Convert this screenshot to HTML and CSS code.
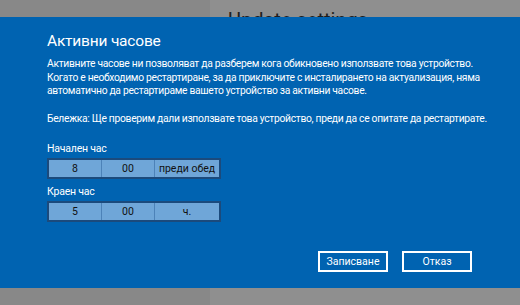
FILE: index.html
```html
<!DOCTYPE html>
<html lang="bg">

<head>
	<meta charset="UTF-8">
	<meta name="viewport" content="width=device-width, initial-scale=1.0">
	<title>Активни часове</title>
	<link rel="stylesheet" href="styles.css">
</head>

<body>
	<div class="page">
		<aside class="nav"></aside>
		<main class="content">
			<h1>Update settings</h1>
		</main>
	</div>

	<div class="dialog">
		<h2>Активни часове</h2>
		<p class="text">Активните часове ни позволяват да разберем кога обикновено използвате това устройство.<br>Когато е необходимо рестартиране, за да приключите с инсталирането на актуализация, няма<br>автоматично да рестартираме вашето устройство за активни часове.</p>
		<p class="text note">Бележка: Ще проверим дали използвате това устройство, преди да се опитате да рестартирате.</p>

		<div class="field">
			<label>Начален час</label>
			<div class="picker">
				<span>8</span>
				<span>00</span>
				<span class="wide">преди обед</span>
			</div>
		</div>
		<div class="field">
			<label>Краен час</label>
			<div class="picker">
				<span>5</span>
				<span>00</span>
				<span class="wide">ч.</span>
			</div>
		</div>

		<div class="buttons">
			<button>Записване</button>
			<button>Отказ</button>
		</div>
	</div>
</body>

</html>
```

FILE: styles.css
```css
html,
body {
	margin: 0;
	height: 100%;
}

body {
	position: relative;
	overflow: hidden;
	font-family: Roboto, "Noto Sans", sans-serif;
}

.page {
	display: grid;
	grid-template-columns: 210px 1fr;
	height: 100%;
}

.nav {
	background: #888888;
}

.content {
	background: #8f8f8f;
	padding-left: 18px;
}

h1 {
	margin: 0;
	padding-top: 7px;
	font-weight: 400;
	font-size: 20px;
	line-height: 26px;
	color: #1e1e1e;
}

.dialog {
	position: absolute;
	top: 17px;
	left: 0;
	right: 0;
	height: 271px;
	box-sizing: border-box;
	padding: 12px 30px 16px 47px;
	background: #0063b1;
	color: #fff;
	display: flex;
	flex-direction: column;
}

h2 {
	margin: 0;
	font-weight: 400;
	font-size: 15.5px;
	line-height: 24px;
	letter-spacing: -0.2px;
}

.text {
	margin: 4px 0 0;
	font-size: 10.3px;
	line-height: 13.5px;
	letter-spacing: -0.3px;
	white-space: nowrap;
}

.note {
	margin-top: 14px;
}

.field {
	margin-top: 17px;
}

.field + .field {
	margin-top: 6px;
}

label {
	display: block;
	font-size: 10.5px;
	line-height: 14px;
	margin-bottom: 2px;
	letter-spacing: -0.2px;
}

.picker {
	display: flex;
	width: 174px;
	height: 21px;
	box-sizing: border-box;
	border: 2px solid #1b4a7c;
	background: #6fa6d8;
	color: #111;
	font-size: 10.5px;
}

.picker span {
	width: 52px;
	display: flex;
	align-items: center;
	justify-content: center;
	border-right: 1px solid #4c82b8;
}

.picker .wide {
	flex: 1;
	border-right: 0;
}

.buttons {
	margin-top: auto;
	margin-right: 18px;
	display: flex;
	justify-content: flex-end;
	gap: 14px;
}

button {
	width: 70px;
	height: 21px;
	padding: 0;
	border: 2px solid #fff;
	background: transparent;
	color: #fff;
	font-family: inherit;
	font-size: 10.5px;
}
```
